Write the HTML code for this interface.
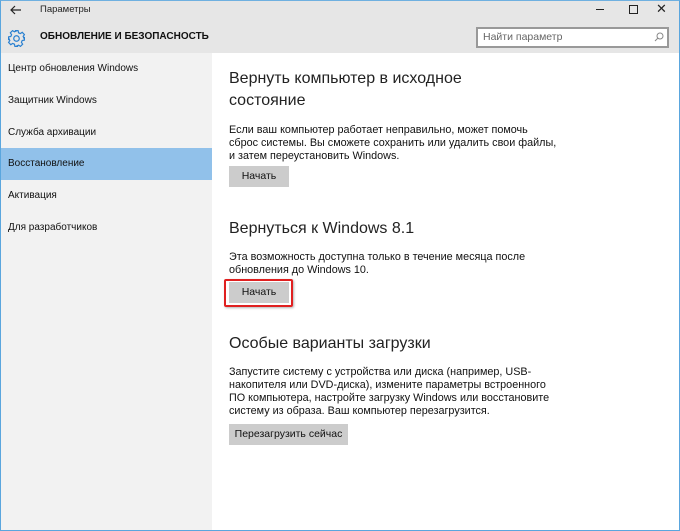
<!DOCTYPE html>
<html><head><meta charset="utf-8"><style>
*{margin:0;padding:0;box-sizing:border-box}
body{width:680px;height:531px;position:relative;overflow:hidden;background:#fff;font-family:"Liberation Sans","DejaVu Sans",sans-serif;color:#000}
.a{position:absolute;white-space:nowrap}
#hdr{left:0;top:0;width:680px;height:53px;background:#e6e6e6}
#side{left:0;top:53px;width:212px;height:478px;background:#f2f2f2}
#sel{left:0;top:148px;width:212px;height:32px;background:#91c1ea}
.si{left:8px;font-size:10px;color:#111;line-height:14px}
h2{position:absolute;font-weight:normal;font-size:16px;color:#222;white-space:nowrap;line-height:21px}
.p{position:absolute;font-size:10.8px;line-height:13px;color:#111;white-space:nowrap}
.btn{position:absolute;background:#cccccc;font-size:10.5px;color:#111;text-align:center;height:21px;line-height:21px}
</style></head><body>
<div class="a" id="hdr"></div>
<div class="a" id="side"></div>
<div class="a" id="sel"></div>
<div class="a" style="left:0;top:0;width:680px;height:531px;border:1px solid #5aa6de;border-top:1px solid #6fb0e0"></div>
<svg class="a" style="left:10px;top:5px" width="12" height="10" viewBox="0 0 12 10"><path d="M11 5H1M5 1L1 5l4 4" stroke="#222" stroke-width="1.2" fill="none"/></svg>
<div class="a" style="left:40px;top:4px;font-size:9.5px;color:#222">Параметры</div>
<div class="a" style="left:596px;top:9px;width:8px;height:1px;background:#222"></div>
<div class="a" style="left:629px;top:5px;width:9px;height:9px;border:1px solid #222"></div>
<div class="a" style="left:656px;top:1px;font-size:13px;color:#222">✕</div>
<svg class="a" style="left:7px;top:29px" width="19" height="19" viewBox="0 0 24 24"><path d="M10 2h4l.6 2.8 2.2 1 2.4-1.6 2.8 2.8-1.6 2.4 1 2.2L22 10v4l-2.8.6-1 2.2 1.6 2.4-2.8 2.8-2.4-1.6-2.2 1L14 22h-4l-.6-2.8-2.2-1-2.4 1.6-2.8-2.8 1.6-2.4-1-2.2L2 14v-4l2.8-.6 1-2.2-1.6-2.4 2.8-2.8 2.4 1.6 2.2-1z" fill="none" stroke="#2a80d0" stroke-width="1.5"/><circle cx="12" cy="12" r="3.5" fill="none" stroke="#2a80d0" stroke-width="1.5"/></svg>
<div class="a" style="left:40px;top:31px;font-size:10px;font-weight:bold;color:#111">ОБНОВЛЕНИЕ И БЕЗОПАСНОСТЬ</div>
<div class="a" style="left:476px;top:27px;width:193px;height:21px;background:#fff;border:2px solid #999"></div>
<div class="a" style="left:483px;top:31px;font-size:10.5px;color:#666">Найти параметр</div>
<svg class="a" style="left:654px;top:32px" width="10" height="10" viewBox="0 0 10 10"><circle cx="6" cy="4" r="3" fill="none" stroke="#888"/><path d="M4 6L1 9" stroke="#888"/></svg>
<div class="a si" style="top:62px">Центр обновления Windows</div>
<div class="a si" style="top:94px">Защитник Windows</div>
<div class="a si" style="top:126px">Служба архивации</div>
<div class="a si" style="top:157px">Восстановление</div>
<div class="a si" style="top:189px">Активация</div>
<div class="a si" style="top:221px">Для разработчиков</div>
<h2 style="left:229px;top:68px">Вернуть компьютер в исходное</h2>
<h2 style="left:229px;top:90px">состояние</h2>
<div class="p" style="left:229px;top:124px">Если ваш компьютер работает неправильно, может помочь<br>сброс системы. Вы сможете сохранить или удалить свои файлы,<br>и затем переустановить Windows.</div>
<div class="btn" style="left:229px;top:166px;width:60px">Начать</div>
<h2 style="left:229px;top:218px">Вернуться к Windows 8.1</h2>
<div class="p" style="left:229px;top:251px">Эта возможность доступна только в течение месяца после<br>обновления до Windows 10.</div>
<div class="btn" style="left:229px;top:282px;width:60px">Начать</div>
<div class="a" style="left:224px;top:279px;width:69px;height:28px;border:2px solid #e02020;border-radius:2px;box-shadow:1px 1px 2px rgba(0,0,0,.3)"></div>
<h2 style="left:229px;top:333px">Особые варианты загрузки</h2>
<div class="p" style="left:229px;top:366px">Запустите систему с устройства или диска (например, USB-<br>накопителя или DVD-диска), измените параметры встроенного<br>ПО компьютера, настройте загрузку Windows или восстановите<br>систему из образа. Ваш компьютер перезагрузится.</div>
<div class="btn" style="left:229px;top:424px;width:119px">Перезагрузить сейчас</div>
</body></html>
